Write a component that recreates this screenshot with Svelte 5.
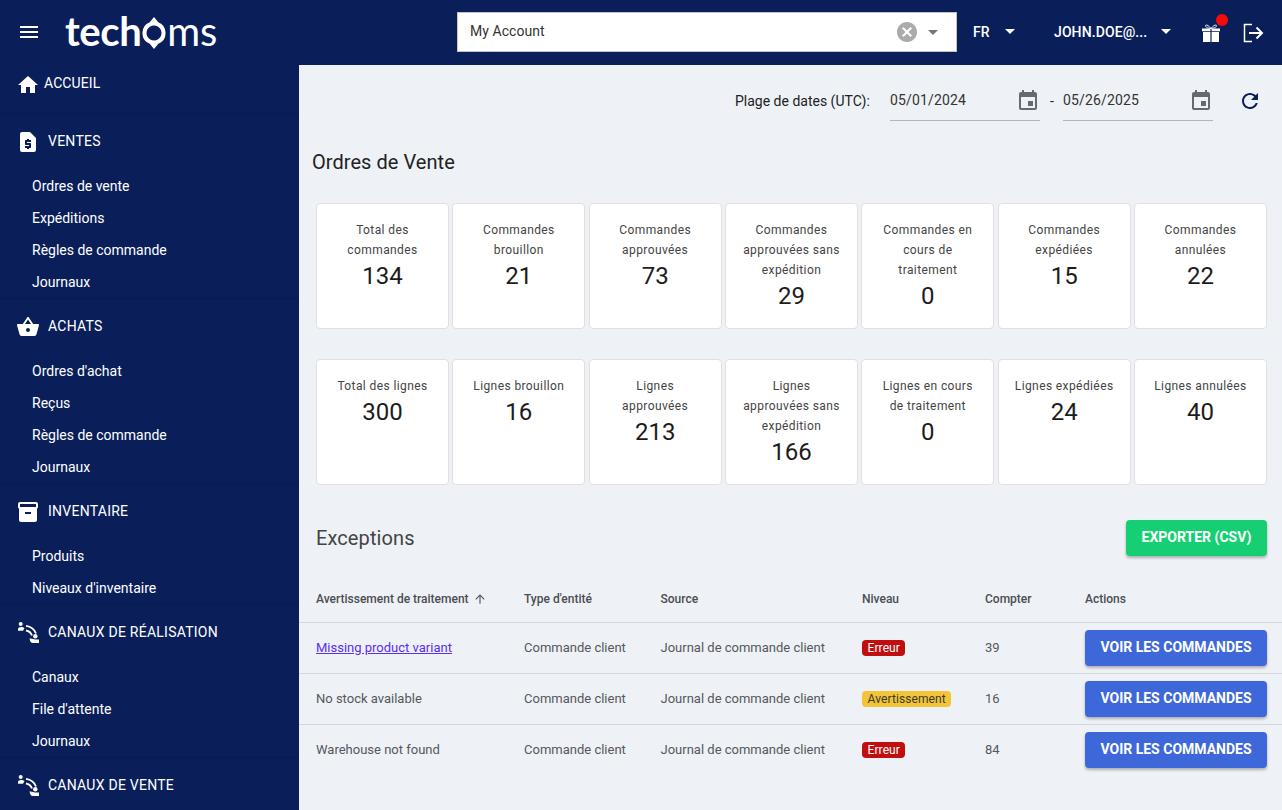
<script>
  const nav = [
    { title: 'VENTES', icon: 'quote', items: ['Ordres de vente', 'Expéditions', 'Règles de commande', 'Journaux'] },
    { title: 'ACHATS', icon: 'basket', items: ["Ordres d'achat", 'Reçus', 'Règles de commande', 'Journaux'] },
    { title: 'INVENTAIRE', icon: 'box', items: ['Produits', "Niveaux d'inventaire"] },
    { title: 'CANAUX DE RÉALISATION', icon: 'chan', items: ['Canaux', "File d'attente", 'Journaux'] },
    { title: 'CANAUX DE VENTE', icon: 'chan', items: [] }
  ];
  const paths = {
    home: 'M10 20v-6h4v6h5v-8h3L12 3 2 12h3v8z',
    quote: 'M14 2H6c-1.1 0-1.99.9-1.99 2L4 20c0 1.1.89 2 1.99 2H18c1.1 0 2-.9 2-2V8l-6-6zm1 10h-4v1h3c.55 0 1 .45 1 1v3c0 .55-.45 1-1 1h-1v1h-2v-1H9v-2h4v-1h-3c-.55 0-1-.45-1-1v-3c0-.55.45-1 1-1h1V9h2v1h2v2z',
    basket: 'M17.21 9l-4.38-6.56c-.19-.28-.51-.42-.83-.42-.32 0-.64.14-.83.43L6.79 9H2c-.55 0-1 .45-1 1 0 .09.01.18.04.27l2.54 9.27c.23.84 1 1.46 1.92 1.46h13c.92 0 1.69-.62 1.93-1.46l2.54-9.27L23 10c0-.55-.45-1-1-1h-4.79zM9 9l3-4.4L15 9H9zm3 8c-1.1 0-2-.9-2-2s.9-2 2-2 2 .9 2 2-.9 2-2 2z',
    box: 'M20 2H4c-1 0-2 .9-2 2v3.01c0 .72.43 1.34 1 1.69V20c0 1.1 1.1 2 2 2h14c.9 0 2-.9 2-2V8.7c.57-.35 1-.97 1-1.69V4c0-1.1-1-2-2-2zm-5 12H9v-2h6v2zm5-7H4V4l16-.02V7z'
  };
  const row1 = [
    ['Total des commandes', 134], ['Commandes brouillon', 21], ['Commandes approuvées', 73],
    ['Commandes approuvées sans expédition', 29], ['Commandes en cours de traitement', 0],
    ['Commandes expédiées', 15], ['Commandes annulées', 22]
  ];
  const row2 = [
    ['Total des lignes', 300], ['Lignes brouillon', 16], ['Lignes approuvées', 213],
    ['Lignes approuvées sans expédition', 166], ['Lignes en cours de traitement', 0],
    ['Lignes expédiées', 24], ['Lignes annulées', 40]
  ];
  const rows = [
    { w: 'Missing product variant', link: true, level: 'Erreur', kind: 'err', n: 39 },
    { w: 'No stock available', level: 'Avertissement', kind: 'warn', n: 16 },
    { w: 'Warehouse not found', level: 'Erreur', kind: 'err', n: 84 }
  ];
  const dates = ['05/01/2024', '05/26/2025'];
</script>

{#snippet navIcon(name)}
  {#if name === 'chan'}
    <svg class="chan" viewBox="0 0 21 21">
      <circle cx="2.700" cy="2" r="2" fill="#fff" />
      <path d="M0 8.800V7C0 5.600 1.600 4.900 3 4.900c1.500 0 2.600.4 3.500 1.200L5 8.800z" fill="#fff" />
      <path d="M8 3.800C12.500 4.500 16.500 7.500 18 11.500" fill="none" stroke="#fff" stroke-width="1.800" />
      <path d="M8 8.500C11 9 13 10.800 14 13.500" fill="none" stroke="#fff" stroke-width="1.800" />
      <circle cx="17.300" cy="14.300" r="2.200" fill="#fff" />
      <path d="M11.500 16.500c1.300-.3 2.500.1 3.500.6 1.800.6 3.900.5 6 .5V21h-6.300c-1.500 0-2.700-1.300-3.200-4.500z" fill="#fff" />
    </svg>
  {:else}
    <svg class="ni" viewBox="0 0 24 24" fill="#fff"><path d={paths[name]} /></svg>
  {/if}
{/snippet}

<div class="app">
  <header class="top">
    <svg class="burger" viewBox="0 0 24 24" fill="#fff"><path d="M3 18h18v-2H3v2zm0-5h18v-2H3v2zm0-7v2h18V6H3z" /></svg>
    <div class="logo">
      <span class="lb">tech</span><svg class="lo" viewBox="0 0 24 32"><path d="M12 0L16.300 5.300A11.500 11.500 0 0 1 16.300 26.700L12 32L7.700 26.700A11.500 11.500 0 0 1 7.700 5.300zM12 8.500a7.500 7.500 0 1 0 .01 0z" fill="#fff" fill-rule="evenodd" /></svg><span class="ll">ms</span>
    </div>
    <div class="account">
      <span class="acc-text">My Account</span>
      <svg class="clear" viewBox="0 0 24 24" fill="#ababab"><path d="M12 2C6.470 2 2 6.470 2 12s4.470 10 10 10 10-4.470 10-10S17.530 2 12 2zm5 13.590L15.590 17 12 13.410 8.410 17 7 15.590 10.590 12 7 8.410 8.410 7 12 10.590 15.590 7 17 8.410 13.410 12 17 15.590z" /></svg>
      <span class="caret grey"></span>
    </div>
    <div class="lang"><span>FR</span><span class="caret"></span></div>
    <div class="user"><span>JOHN.DOE@...</span><span class="caret"></span></div>
    <div class="gift">
      <svg viewBox="0 0 20 20" fill="#fff">
        <path d="M2 9h7.400v10H2zM10.600 9H18v10h-7.400zM1 5.500h8.400v2.700H1zM10.600 5.500H19v2.700h-8.400z" />
        <path d="M10 5.500C8 3 6 1.500 4.800 2.200 3.700 3 5 5 10 5.500c5 -.5 6.300-2.500 5.200-3.300C14 1.500 12 3 10 5.500z" fill="none" stroke="#fff" stroke-width=".9" />
      </svg>
      <span class="dot"></span>
    </div>
    <svg class="logout" viewBox="0 0 22 22" fill="none" stroke="#fff" stroke-width="2"><path d="M10 2.500H2.500v17H10" stroke-width="1.500" /><path d="M7 11h13M14.500 5.500l5.500 5.500-5.500 5.500" /></svg>
  </header>

  <div class="body">
    <aside class="side">
      <div class="home">
        <svg class="homei" viewBox="0 0 24 24" fill="#fff"><path d={paths.home} /></svg>
        <span>ACCUEIL</span>
      </div>
      {#each nav as s}
        <section class="sec">
          <div class="sec-h">
            <span class="ic">{@render navIcon(s.icon)}</span>
            <span>{s.title}</span>
          </div>
          {#each s.items as it}
            <div class="it">{it}</div>
          {/each}
        </section>
      {/each}
    </aside>

    <main class="main">
      <div class="dates">
        <span class="dl">Plage de dates (UTC):</span>
        {#each dates as d, i}
          {#if i === 1}<span class="sep">-</span>{/if}
          <div class="df">
            <span>{d}</span>
            <svg viewBox="0 0 24 24" fill="#66696e"><path d="M17 12h-5v5h5v-5zM16 1v2H8V1H6v2H5c-1.110 0-1.990.9-1.990 2L3 19c0 1.100.89 2 2 2h14c1.100 0 2-.9 2-2V5c0-1.100-.9-2-2-2h-1V1h-2zm3 18H5V8h14v11z" /><path d="M4 4h16v4H4z" /></svg>
          </div>
        {/each}
        <svg class="refresh" viewBox="0 0 24 24" fill="#0a1f5a"><path d="M17.650 6.350C16.200 4.900 14.210 4 12 4c-4.420 0-7.990 3.580-7.990 8s3.570 8 7.990 8c3.730 0 6.840-2.550 7.730-6h-2.080c-.82 2.330-3.040 4-5.650 4-3.310 0-6-2.690-6-6s2.690-6 6-6c1.660 0 3.140.69 4.220 1.780L13 11h7V4l-2.350 2.350z" /></svg>
      </div>

      <h1 class="title">Ordres de Vente</h1>

      {#each [row1, row2] as r}
        <div class="cards">
          {#each r as c}
            <div class="card">
              <div class="cl">{c[0]}</div>
              <div class="cv">{c[1]}</div>
            </div>
          {/each}
        </div>
      {/each}

      <div class="exc">
        <h2>Exceptions</h2>
        <button class="btn green">EXPORTER (CSV)</button>
      </div>

      <div class="grid ghead">
        <div class="sortc">Avertissement de traitement <svg viewBox="0 0 24 24" fill="#55585c"><path d="M4 12l1.410 1.410L11 7.830V20h2V7.830l5.580 5.590L20 12l-8-8-8 8z" /></svg></div>
        <div>Type d'entité</div>
        <div>Source</div>
        <div>Niveau</div>
        <div>Compter</div>
        <div>Actions</div>
      </div>
      {#each rows as r}
        <div class="grid grow">
          <div class="tx">{#if r.link}<a href="#top" class="lnk">{r.w}</a>{:else}{r.w}{/if}</div>
          <div class="tx">Commande client</div>
          <div class="tx">Journal de commande client</div>
          <div><span class="tag {r.kind}">{r.level}</span></div>
          <div class="tx">{r.n}</div>
          <div><button class="btn blue">VOIR LES COMMANDES</button></div>
        </div>
      {/each}
    </main>
  </div>
</div>

<style>
  :global(body) { margin: 0; background: #eef1f6; }
  .app { width: 1282px; height: 810px; overflow: hidden; display: flex; flex-direction: column; font-family: Roboto, "Liberation Sans", sans-serif; background: #eef1f6; }
  .top { height: 65px; flex: none; background: #0a1f5a; display: flex; align-items: center; color: #fff; position: relative; }
  .burger { width: 24px; height: 24px; margin-left: 17px; flex: none; margin-top: -1px; }
  .logo { display: flex; align-items: center; margin-left: 24px; width: 392px; flex: none; color: #fff; font-family: Lato, sans-serif; font-size: 40px; height: 44px; margin-top: -3px; }
  .lb { font-weight: 700; letter-spacing: -0.4px; }
  .ll { font-weight: 400; letter-spacing: -0.3px; }
  .lo { width: 24px; height: 32px; margin: 3px 1px 0 1px; flex: none; }
  .account { width: 500px; height: 40px; box-sizing: border-box; background: #fff; border: 1px solid #c4c4c4; display: flex; align-items: center; padding: 0 18px 0 12px; color: #333; font-size: 14px; letter-spacing: .05px; flex: none; margin-top: -1px; }
  .acc-text { flex: 1; margin-bottom: 2px; }
  .clear { width: 24px; height: 24px; margin-right: 9px; }
  .caret { display: inline-block; width: 0; height: 0; border-left: 5px solid transparent; border-right: 5px solid transparent; border-top: 5px solid #fff; }
  .caret.grey { border-top-color: #777; }
  .lang { margin-left: 16px; width: 81px; display: flex; align-items: center; font-size: 14px; font-weight: 500; gap: 15px; flex: none; margin-top: -2px; }
  .user { display: flex; align-items: center; font-size: 14px; font-weight: 500; gap: 14px; flex: none; margin-top: -2px; width: 147px; letter-spacing: .1px; }
  .gift { position: relative; width: 20px; height: 20px; flex: none; }
  .gift svg { width: 20px; height: 20px; display: block; }
  .dot { position: absolute; right: -7px; top: -9px; width: 12px; height: 12px; background: #f60b0b; border-radius: 50%; }
  .logout { width: 22px; height: 22px; margin-left: 21px; flex: none; }
  .body { flex: 1; display: flex; min-height: 0; }
  .side { width: 299px; flex: none; background: #0a1f5a; color: #fff; overflow: hidden; }
  .home { height: 48px; border-bottom: 1px solid #081a4e; display: flex; align-items: flex-start; font-size: 14px; padding-left: 16px; }
  .home span { margin-top: 9px; line-height: 18px; margin-left: 4px; letter-spacing: .1px; }
  .homei { width: 24px; height: 24px; margin-top: 8px; flex: none; }
  .sec { border-bottom: 1px solid #081a4e; }
  .sec:last-child { border-bottom: 0; }
  .sec-h { height: 56px; box-sizing: border-box; display: flex; align-items: flex-start; padding-top: 18px; font-size: 14px; line-height: 18px; letter-spacing: .25px; }
  .ic { width: 48px; height: 18px; flex: none; position: relative; display: block; }
  .ni { width: 24px; height: 24px; position: absolute; left: 16px; top: -2px; }
  .chan { width: 21px; height: 21px; position: absolute; left: 18px; top: -1px; }
  .it { height: 32px; line-height: 32px; padding-left: 32px; font-size: 14px; color: #fff; }
  .main { flex: 1; min-width: 0; position: relative; }
  .dates { height: 56px; display: flex; align-items: center; padding-left: 436px; font-size: 14px; color: #222; margin-top: 8px; }
  .dl { width: 155px; flex: none; }
  .df { width: 150px; height: 40px; box-sizing: border-box; border-bottom: 1px solid #b4b6ba; display: flex; align-items: center; justify-content: space-between; letter-spacing: .15px; color: #333; flex: none; }
  .df span { margin-bottom: 1px; }
  .df svg { width: 24px; height: 24px; }
  .sep { width: 23px; padding-left: 10px; box-sizing: border-box; flex: none; }
  .refresh { width: 24px; height: 24px; margin-left: 25px; }
  .title { margin: 0 0 29px 13px; font-size: 20px; font-weight: 400; line-height: 24px; color: #222; letter-spacing: .05px; padding-top: 21px; }
  .cards { display: grid; grid-template-columns: repeat(7, 133px); column-gap: 3.33px; margin: 0 0 30px 17px; }
  .card { height: 126px; box-sizing: border-box; background: #fff; border: 1px solid #e0e0e0; border-radius: 4px; padding: 16px 12px 0; text-align: center; }
  .cl { font-size: 12px; line-height: 20px; letter-spacing: .4px; color: #444; }
  .cv { font-size: 24px; line-height: 32px; color: #1c1c1c; }
  .exc { display: flex; justify-content: space-between; align-items: center; height: 36px; margin: 35px 15px 0 17px; }
  .exc h2 { margin: 0; font-size: 20px; font-weight: 400; color: #444; letter-spacing: .1px; }
  .btn { border: 0; border-radius: 4px; color: #fff; font-family: inherit; font-size: 14px; font-weight: 700; height: 36px; box-shadow: 0 2px 3px rgba(0,0,0,.28); padding: 0 0 2px; letter-spacing: 0; }
  .green { background: #17cf73; width: 141px; }
  .blue { background: #3e68d9; width: 182px; }
  .grid { display: grid; grid-template-columns: 208px 136.500px 201.500px 123px 100px 1fr; padding-left: 17px; align-items: center; font-size: 13px; color: #55585c; letter-spacing: 0; border-bottom: 1px solid #d3d6dc; }
  .ghead { height: 47px; padding-top: 1px; margin-top: 18px; font-size: 12px; font-weight: 500; color: #4a4d52; }
  .grow { height: 50px; }
  .grow:last-child { border-bottom: 0; }
  .tx { margin-bottom: 2px; }
  .sortc { display: flex; align-items: center; gap: 4px; }
  .sortc svg { width: 14px; height: 14px; }
  .lnk { color: #5a2ef5; text-decoration: underline; }
  .tag { display: inline-block; font-size: 12px; line-height: 16px; padding: 0 5px 0 5.500px; border-radius: 4px; letter-spacing: .1px; }
  .err { background: #c10f10; color: #fff; }
  .warn { background: #f2c438; color: #3a3a2a; }
</style>
